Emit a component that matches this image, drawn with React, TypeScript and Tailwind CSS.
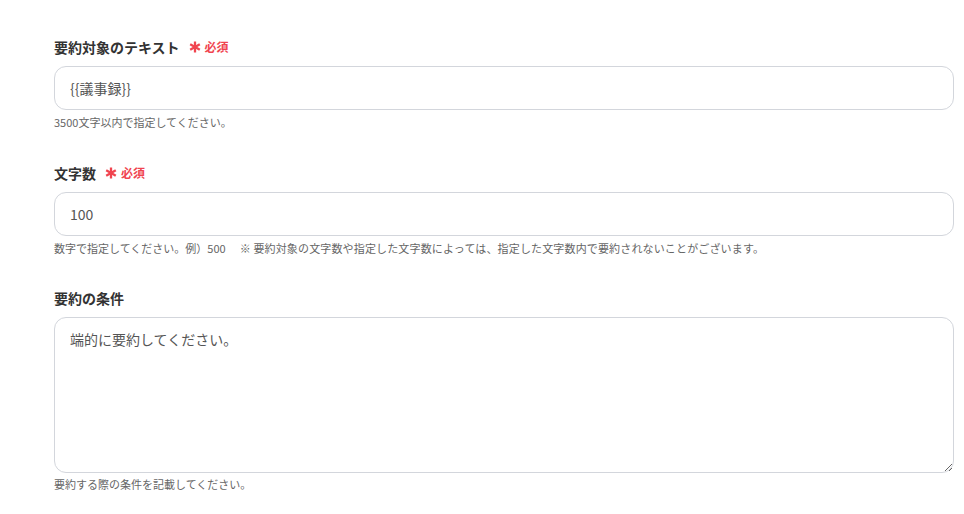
import React from "react";

const font = { fontFamily: '"Noto Sans CJK JP", "Noto Sans", sans-serif' };

function Required() {
  return (
    <span className="ml-[9px] inline-flex items-center gap-[4px] text-[#f0444f]">
      <svg width="12" height="12" viewBox="0 0 12 12" className="shrink-0">
        <g stroke="#f0444f" strokeWidth="2.3" strokeLinecap="butt">
          <line x1="6" y1="0.5" x2="6" y2="11.5" />
          <line x1="1.2" y1="3.25" x2="10.8" y2="8.75" />
          <line x1="1.2" y1="8.75" x2="10.8" y2="3.25" />
        </g>
      </svg>
      <span className="text-[12px] font-bold leading-none">必須</span>
    </span>
  );
}

export default function App() {
  return (
    <div className="min-h-[514px] w-[964px] bg-white" style={font}>
      <div className="flex w-[900px] flex-col pl-[54px] pt-[37px] box-content">
        <div className="flex h-[20px] items-center text-[14px] font-bold leading-[20px] text-[#333]">
          要約対象のテキスト
          <Required />
        </div>
        <input
          readOnly
          value="{{議事録}}"
          className="mt-[9px] h-[44px] w-full rounded-xl border border-[#d3d6dc] px-[15px] text-[14px] text-[#555] outline-none"
          style={font}
        />
        <div className="mt-[4px] h-[16px] text-[11px] leading-[16px] text-[#666]">
          3500文字以内で指定してください。
        </div>

        <div className="mt-[33px] flex h-[20px] items-center text-[14px] font-bold leading-[20px] text-[#333]">
          文字数
          <Required />
        </div>
        <input
          readOnly
          value="100"
          className="mt-[9px] h-[44px] w-full rounded-xl border border-[#d3d6dc] px-[15px] text-[14px] text-[#555] outline-none"
          style={font}
        />
        <div className="mt-[4px] flex h-[16px] text-[11px] leading-[16px] text-[#666] whitespace-pre">
          <span>数字で指定してください。例）500</span>
          <span className="ml-[14px] tracking-[0.15px]">
            ※ 要約対象の文字数や指定した文字数によっては、指定した文字数内で要約されないことがございます。
          </span>
        </div>

        <div className="mt-[32px] flex h-[20px] items-center text-[14px] font-bold leading-[20px] text-[#333]">
          要約の条件
        </div>
        <textarea
          readOnly
          value="端的に要約してください。"
          className="mt-[9px] h-[156px] w-full rounded-xl border border-[#d3d6dc] px-[15px] py-[11px] text-[14px] leading-[20px] text-[#555] outline-none"
          style={font}
        />
        <div className="mt-[3px] h-[16px] text-[11px] leading-[16px] text-[#666]">
          要約する際の条件を記載してください。
        </div>
      </div>
    </div>
  );
}
